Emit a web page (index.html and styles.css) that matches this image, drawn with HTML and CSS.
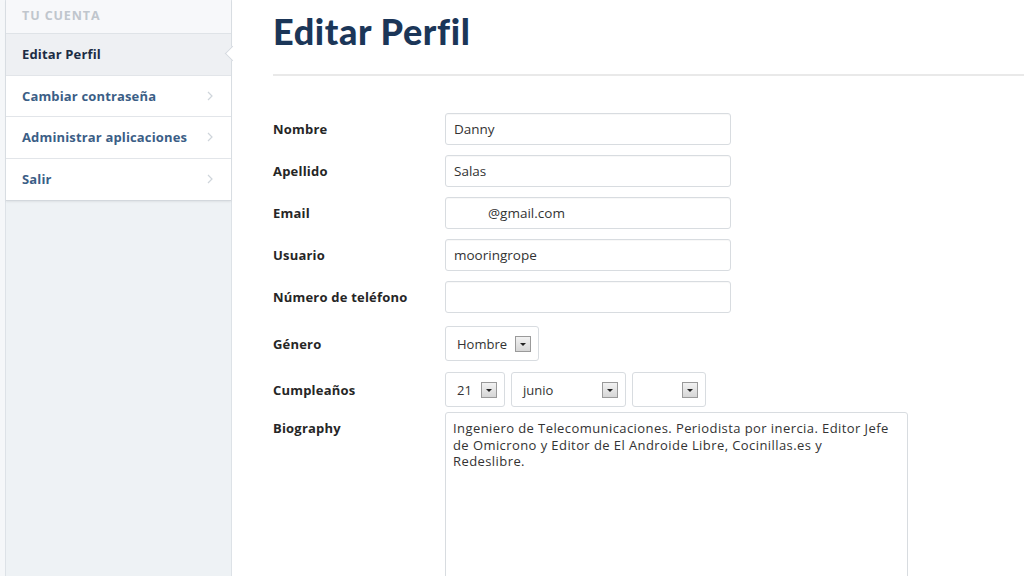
FILE: index.html
```html
<!DOCTYPE html>
<html lang="es">
<head>
<meta charset="utf-8">
<title>Editar Perfil</title>
<link rel="stylesheet" href="styles.css">
</head>
<body>
<div class="page">
  <div class="side-wrap">
    <aside class="sidebar">
      <nav class="menu">
        <div class="menu-head">TU CUENTA</div>
        <a class="menu-item active">Editar Perfil</a>
        <a class="menu-item">Cambiar contraseña<svg class="chev" width="6" height="10" viewBox="0 0 6 10"><polyline points="1,1 5,5 1,9" fill="none" stroke="#cfd5db" stroke-width="1.2"/></svg></a>
        <a class="menu-item">Administrar aplicaciones<svg class="chev" width="6" height="10" viewBox="0 0 6 10"><polyline points="1,1 5,5 1,9" fill="none" stroke="#cfd5db" stroke-width="1.2"/></svg></a>
        <a class="menu-item">Salir<svg class="chev" width="6" height="10" viewBox="0 0 6 10"><polyline points="1,1 5,5 1,9" fill="none" stroke="#cfd5db" stroke-width="1.2"/></svg></a>
      </nav>
    </aside>
  </div>
  <main class="main">
    <h1 class="title">Editar Perfil</h1>
    <hr class="rule">
    <form class="form">
      <div class="row"><label class="lbl">Nombre</label><div class="field">Danny</div></div>
      <div class="row"><label class="lbl">Apellido</label><div class="field">Salas</div></div>
      <div class="row"><label class="lbl">Email</label><div class="field email">@gmail.com</div></div>
      <div class="row"><label class="lbl">Usuario</label><div class="field">mooringrope</div></div>
      <div class="row"><label class="lbl">Número de teléfono</label><div class="field"></div></div>
      <div class="row sel-row"><label class="lbl">Género</label>
        <div class="selects">
          <div class="sel w-gen"><span>Hombre</span><span class="arrow"></span></div>
        </div>
      </div>
      <div class="row sel-row bday"><label class="lbl">Cumpleaños</label>
        <div class="selects">
          <div class="sel w-day"><span>21</span><span class="arrow"></span></div>
          <div class="sel w-mon"><span>junio</span><span class="arrow"></span></div>
          <div class="sel w-year"><span></span><span class="arrow"></span></div>
        </div>
      </div>
      <div class="row bio-row"><label class="lbl">Biography</label>
        <textarea class="bio">Ingeniero de Telecomunicaciones. Periodista por inercia. Editor Jefe de Omicrono y Editor de El Androide Libre, Cocinillas.es y Redeslibre.</textarea>
      </div>
    </form>
  </main>
</div>
</body>
</html>
```
FILE: styles.css
```css
html, body {
  margin: 0;
  padding: 0;
  height: 100%;
  background: #ffffff;
  overflow: hidden;
}
.page {
  display: flex;
  height: 576px;
  font-family: "Open Sans", "Lato", sans-serif;
}
.side-wrap {
  background: #f5f7f9;
  padding-left: 5px;
  flex: none;
}
.sidebar {
  width: 225px;
  height: 100%;
  background: #eef2f5;
  border-left: 1px solid #dde2e7;
  border-right: 1px solid #dde2e7;
}
.menu {
  display: flex;
  flex-direction: column;
  background: #fff;
  border-bottom: 1px solid #d3d8dd;
  box-shadow: 0 1px 2px rgba(0,0,0,0.07);
}
.menu-head {
  height: 34px;
  box-sizing: border-box;
  padding: 7px 0 0 16px;
  background: #f7f8fa;
  border-bottom: 1px solid #dfe3e7;
  color: #c0c6cd;
  font-size: 12.5px;
  font-weight: 700;
  letter-spacing: 0.9px;
}
.menu-item {
  position: relative;
  display: flex;
  align-items: center;
  justify-content: space-between;
  padding: 0 18px 0 16px;
  box-sizing: border-box;
  height: 41.5px;
  border-bottom: 1px solid #e2e5e9;
  color: #3b5e86;
  font-size: 13px;
  font-weight: 700;
  letter-spacing: 0.15px;
}
.menu-item:last-child { border-bottom: none; }
.menu-item.active {
  background: #eef0f3;
  color: #1b2c45;
}
.menu-item.active::after {
  content: "";
  position: absolute;
  right: -7px;
  top: 50%;
  width: 10px;
  height: 10px;
  margin-top: -6px;
  background: #fff;
  border-left: 1px solid #d5dae0;
  border-bottom: 1px solid #d5dae0;
  transform: rotate(45deg);
}
.chev { flex: none; }
.main {
  flex: 1;
  padding-left: 41px;
}
.title {
  margin: 11px 0 0;
  font-family: "Lato", sans-serif;
  font-size: 36px;
  font-weight: 900;
  color: #1b3658;
  line-height: 40px;
  letter-spacing: 0.6px;
}
.rule {
  margin: 23px 0 0;
  border: none;
  height: 2px;
  background: #e9e9e9;
}
.form {
  display: flex;
  flex-direction: column;
  margin-top: 37px;
  gap: 10px;
}
.row {
  display: flex;
  align-items: center;
}
.lbl {
  width: 172px;
  flex: none;
  font-size: 13px;
  font-weight: 700;
  color: #262626;
  letter-spacing: 0.2px;
}
.field {
  width: 286px;
  height: 32px;
  box-sizing: border-box;
  border: 1px solid #d8dce0;
  border-radius: 3px;
  padding: 0 8px;
  display: flex;
  align-items: center;
  font-size: 13.5px;
  color: #333;
  box-shadow: inset 0 1px 1px rgba(0,0,0,0.03);
}
.field.email { padding-left: 42px; }
.sel-row { margin-top: 3px; }
.bday { margin-top: 1px; }
.selects {
  display: flex;
  gap: 6px;
}
.sel {
  height: 35px;
  box-sizing: border-box;
  border: 1px solid #d8dce0;
  border-radius: 3px;
  display: flex;
  align-items: center;
  justify-content: space-between;
  padding: 0 7px 0 11px;
  font-size: 13px;
  color: #333;
}
.w-gen { width: 94px; }
.w-day { width: 60px; }
.w-mon { width: 115px; }
.w-year { width: 74px; }
.arrow {
  position: relative;
  width: 16px;
  height: 16px;
  box-sizing: border-box;
  border: 1px solid #9a9a9a;
  background: linear-gradient(#f2f2f2, #d6d6d6);
}
.arrow::after {
  content: "";
  position: absolute;
  left: 4px;
  top: 6px;
  border-left: 3px solid transparent;
  border-right: 3px solid transparent;
  border-top: 3px solid #222;
}
.bio-row { align-items: flex-start; margin-top: -5px; }
.bio-row .lbl { margin-top: 7px; }
.bio {
  width: 463px;
  height: 175px;
  box-sizing: border-box;
  border: 1px solid #d8dce0;
  border-radius: 3px;
  padding: 7px 12px 5px 7px;
  font-family: "Open Sans", sans-serif;
  font-size: 13px;
  letter-spacing: 0.42px;
  line-height: 16.5px;
  color: #333;
  resize: both;
  outline: none;
}
```
